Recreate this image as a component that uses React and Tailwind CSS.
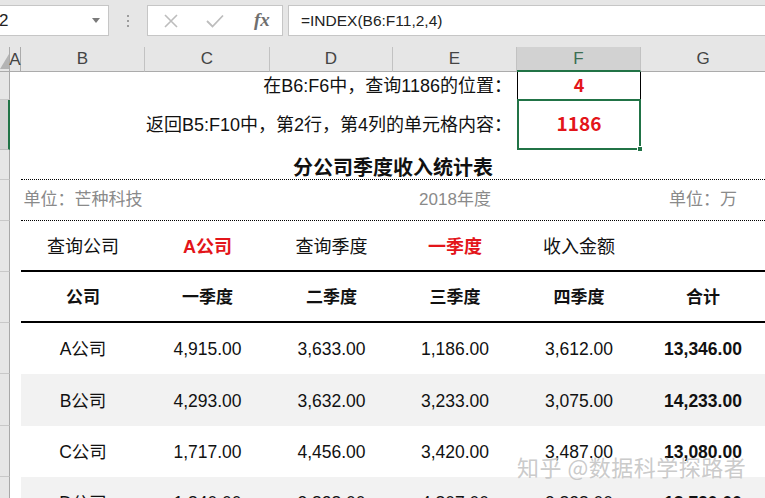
import React from "react";

const FONT = "font-['Liberation_Sans','Noto_Sans_CJK_SC',sans-serif]";
const RED = "text-[#e3151a]";

const data = [
  ["A公司", "4,915.00", "3,633.00", "1,186.00", "3,612.00", "13,346.00"],
  ["B公司", "4,293.00", "3,632.00", "3,233.00", "3,075.00", "14,233.00"],
  ["C公司", "1,717.00", "4,456.00", "3,420.00", "3,487.00", "13,080.00"],
  ["D公司", "1,840.00", "3,828.00", "4,807.00", "3,828.00", "13,720.00"],
];

function Row({ height, selected = false, line = "", shade = false, children }) {
  return (
    <div className={`flex ${height}`}>
      <div
        className={
          selected
            ? "w-[10px] shrink-0 border-b border-r-2 border-b-[#bdbdbd] border-r-[#217346] bg-[#d2d2d2]"
            : "w-[10px] shrink-0 border-b border-r border-b-[#c8c8c8] border-r-[#a8a8a8] bg-[#e6e6e6]"
        }
      />
      <div className="w-[11px] shrink-0 bg-white" />
      <div
        className={`grid flex-1 grid-cols-[124px_125px_123px_124px_124px_124px] ${line} ${
          shade ? "bg-[#f2f2f2]" : "bg-white"
        }`}
      >
        {children}
      </div>
    </div>
  );
}

function Cell({ className = "", children }) {
  return <div className={`flex items-center justify-center ${className}`}>{children}</div>;
}

function FormulaBar() {
  return (
    <div className="flex h-[47px] items-start bg-[#e6e6e6] pt-[5px]">
      <div className="flex h-[31px] w-[109px] items-center justify-between border border-l-0 border-[#c6c6c6] bg-white pr-[8px]">
        <span className="-ml-[1px] text-[17px] text-[#222]">2</span>
        <svg width="8" height="5" viewBox="0 0 8 5">
          <path d="M0 0 L8 0 L4 5 Z" fill="#7a7a7a" />
        </svg>
      </div>
      <div className="flex h-[31px] w-[38px] flex-col items-center justify-center gap-[3px]">
        <span className="h-[2px] w-[2px] bg-[#9c9c9c]" />
        <span className="h-[2px] w-[2px] bg-[#9c9c9c]" />
        <span className="h-[2px] w-[2px] bg-[#9c9c9c]" />
      </div>
      <div className="flex h-[31px] w-[136px] items-center border border-[#c6c6c6] bg-white pl-[16px]">
        <svg width="14" height="14" viewBox="0 0 14 14">
          <path d="M1 1 L13 13 M13 1 L1 13" stroke="#bdbdbd" strokeWidth="1.6" />
        </svg>
        <svg className="ml-[28px]" width="18" height="14" viewBox="0 0 18 14">
          <path d="M1 7 L6.5 12.5 L17 1.5" stroke="#bdbdbd" strokeWidth="1.8" fill="none" />
        </svg>
        <span className="ml-[30px] font-['Liberation_Serif',serif] text-[19px] font-bold italic text-[#6f6f6f]">
          fx
        </span>
      </div>
      <div className="ml-[5px] flex h-[31px] flex-1 items-center border border-r-0 border-[#c6c6c6] bg-white pl-[12px]">
        <span className="text-[15.5px] text-[#222]">=INDEX(B6:F11,2,4)</span>
      </div>
    </div>
  );
}

function ColumnHeaders() {
  const cols = [
    ["B", "w-[124px]"],
    ["C", "w-[125px]"],
    ["D", "w-[123px]"],
    ["E", "w-[124px]"],
  ];
  return (
    <div className="flex h-[25px] bg-[#e6e6e6] text-[17px] text-[#444]">
      <div className="flex w-[10px] shrink-0 items-end border-b border-r border-[#ababab] pb-[2px]">
        <svg width="9" height="15" viewBox="0 0 9 15">
          <path d="M9 0 L9 15 L0 15 Z" fill="#b4b4b4" />
        </svg>
      </div>
      <div className="flex w-[11px] shrink-0 items-center justify-center border-b border-r border-[#ababab] leading-none">
        A
      </div>
      {cols.map(([l, w]) => (
        <div key={l} className={`flex ${w} shrink-0 items-center justify-center border-b border-r border-b-[#ababab] border-r-[#c2c2c2]`}>
          {l}
        </div>
      ))}
      <div className="flex w-[124px] shrink-0 items-center justify-center border-b-2 border-r border-b-[#217346] border-r-[#c2c2c2] bg-[#d2d2d2] text-[#3c6e52]">
        F
      </div>
      <div className="flex w-[124px] shrink-0 items-center justify-center border-b border-[#ababab]">G</div>
    </div>
  );
}

export default function App() {
  return (
    <div className={`relative h-[498px] w-[765px] overflow-hidden bg-white ${FONT} text-[#111]`}>
      <FormulaBar />
      <ColumnHeaders />

      <Row height="h-[28px]">
        <Cell className="col-span-4 justify-end pr-[5px] text-[18px]">在B6:F6中，查询1186的位置：</Cell>
        <Cell className="border-x border-b border-black">
          <span className={`-mt-[2px] font-['Noto_Sans_CJK_SC',sans-serif] text-[18px] font-bold ${RED}`}>4</span>
        </Cell>
        <div />
      </Row>

      <Row height="h-[50px]" selected>
        <Cell className="col-span-4 justify-end pr-[5px] text-[18px]">返回B5:F10中，第2行，第4列的单元格内容：</Cell>
        <Cell className="relative -mt-[1px] border-2 border-[#217346]">
          <span className={`-mt-[2px] font-['Noto_Sans_CJK_SC',sans-serif] text-[19px] font-bold ${RED}`}>1186</span>
          <span className="absolute -bottom-[4px] -right-[4px] h-[6px] w-[6px] border border-white bg-[#217346]" />
        </Cell>
        <div />
      </Row>

      <Row height="h-[30px]" line="border-b border-dotted border-black">
        <Cell className="col-span-6 pt-[2px] font-['Noto_Sans_CJK_SC',sans-serif] text-[20px] font-bold">
          分公司季度收入统计表
        </Cell>
      </Row>

      <Row height="h-[41px]" line="border-b border-dotted border-black">
        <Cell className="text-[17px] text-[#8a8a8a]">单位：芒种科技</Cell>
        <div />
        <div />
        <Cell className="text-[17px] text-[#8a8a8a]">2018年度</Cell>
        <div />
        <Cell className="text-[17px] text-[#8a8a8a]">单位：万</Cell>
      </Row>

      <Row height="h-[51px]" line="border-b-2 border-black">
        <Cell className="pt-[3px] text-[18px]">查询公司</Cell>
        <Cell className={`pt-[3px] text-[18px] font-bold ${RED}`}>A公司</Cell>
        <Cell className="pt-[3px] text-[18px]">查询季度</Cell>
        <Cell className={`pt-[3px] text-[18px] font-bold ${RED}`}>一季度</Cell>
        <Cell className="pt-[3px] text-[18px]">收入金额</Cell>
        <div />
      </Row>

      <Row height="h-[51px]" line="border-b-2 border-black">
        {["公司", "一季度", "二季度", "三季度", "四季度", "合计"].map((t) => (
          <Cell key={t} className="pt-[2px] text-[17px] font-bold">
            {t}
          </Cell>
        ))}
      </Row>

      {data.map((r, i) => (
        <Row key={r[0]} height={i === 1 ? "h-[52px]" : "h-[51px]"} shade={i % 2 === 1}>
          {r.map((v, j) => (
            <Cell key={j} className={j === 5 ? "pt-[2px] text-[17.5px] font-bold" : "pt-[2px] text-[17.5px]"}>
              {v}
            </Cell>
          ))}
        </Row>
      ))}

      <div className="pointer-events-none absolute left-[517px] top-[450px] font-['Noto_Sans_CJK_SC',sans-serif] text-[22px] tracking-[0.5px] text-[#c4c4c4]/90">
        知乎 @数据科学探路者
      </div>
    </div>
  );
}
